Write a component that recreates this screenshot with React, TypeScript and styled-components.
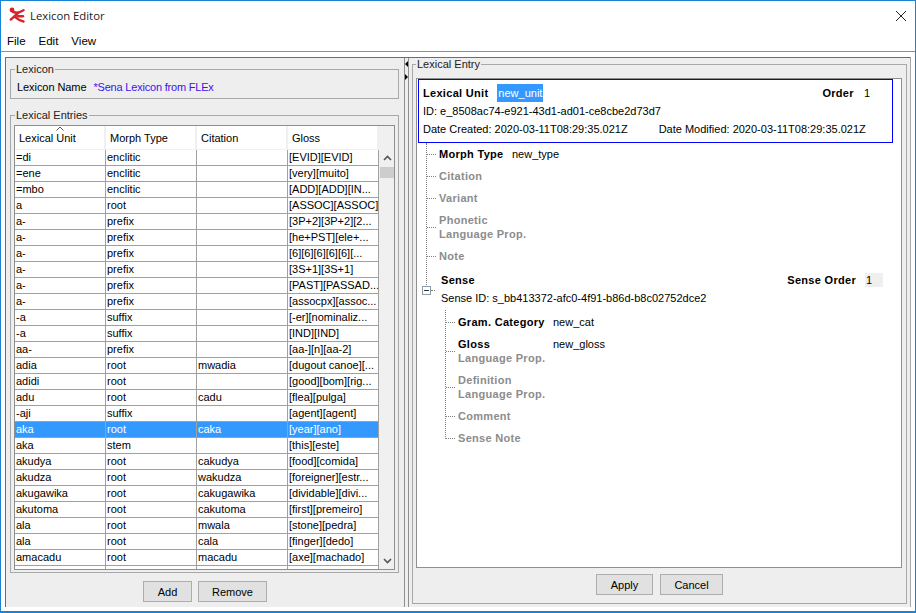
import React from 'react';
import styled, { createGlobalStyle } from 'styled-components';

const Global = createGlobalStyle`
  html, body { margin: 0; padding: 0; background: #fff; }
  body { width: 916px; height: 613px; overflow: hidden; font-family: "Liberation Sans", Arial, sans-serif; font-size: 11px; color: #000; }
`;

type Entry = [string, string, string, string];

const entries: Entry[] = [
  ['=di', 'enclitic', '', '[EVID][EVID]'],
  ['=ene', 'enclitic', '', '[very][muito]'],
  ['=mbo', 'enclitic', '', '[ADD][ADD][IN...'],
  ['a', 'root', '', '[ASSOC][ASSOC]'],
  ['a-', 'prefix', '', '[3P+2][3P+2][2...'],
  ['a-', 'prefix', '', '[he+PST][ele+...'],
  ['a-', 'prefix', '', '[6][6][6][6][6][...'],
  ['a-', 'prefix', '', '[3S+1][3S+1]'],
  ['a-', 'prefix', '', '[PAST][PASSAD...'],
  ['a-', 'prefix', '', '[assocpx][assoc...'],
  ['-a', 'suffix', '', '[-er][nominaliz...'],
  ['-a', 'suffix', '', '[IND][IND]'],
  ['aa-', 'prefix', '', '[aa-][n][aa-2]'],
  ['adia', 'root', 'mwadia', '[dugout canoe][...'],
  ['adidi', 'root', '', '[good][bom][rig...'],
  ['adu', 'root', 'cadu', '[flea][pulga]'],
  ['-aji', 'suffix', '', '[agent][agent]'],
  ['aka', 'root', 'caka', '[year][ano]'],
  ['aka', 'stem', '', '[this][este]'],
  ['akudya', 'root', 'cakudya', '[food][comida]'],
  ['akudza', 'root', 'wakudza', '[foreigner][estr...'],
  ['akugawika', 'root', 'cakugawika', '[dividable][divi...'],
  ['akutoma', 'root', 'cakutoma', '[first][premeiro]'],
  ['ala', 'root', 'mwala', '[stone][pedra]'],
  ['ala', 'root', 'cala', '[finger][dedo]'],
  ['amacadu', 'root', 'macadu', '[axe][machado]'],
  ['amadia', 'root', 'macadia', '[fat][fat]'],
];

const Window = styled.div`
  width: 916px;
  height: 613px;
  box-sizing: border-box;
  border: 1px solid #1883d7;
  border-bottom-width: 2px;
  display: flex;
  flex-direction: column;
  background: #fff;
`;

const TitleBar = styled.div`
  height: 29px;
  flex: none;
  display: flex;
  align-items: center;
  padding: 0 8px;
  font-family: "Open Sans", "Liberation Sans", sans-serif;
  font-size: 11.3px;
  color: #222;
`;

const TitleText = styled.span`
  margin-left: 5px;
  flex: 1;
`;

const MenuBar = styled.div`
  height: 22px;
  flex: none;
  box-sizing: border-box;
  display: flex;
  align-items: center;
  gap: 13px;
  padding: 1px 6px 0;
  font-size: 11.5px;
  border-bottom: 1px solid #8f8f8f;
`;

const Body = styled.div`
  flex: 1;
  display: flex;
  background: #fff;
  padding: 5px 4px 4px;
  min-height: 0;
`;

const Split = styled.div`
  flex: 1;
  display: flex;
  background: #eeeeee;
  border: 1px solid #6d6d6d;
  border-bottom: none;
  border-right-color: #a8a8a8;
  min-height: 0;
`;

const LeftPane = styled.div`
  width: 399px;
  flex: none;
  box-sizing: border-box;
  border-right: 1px solid #8f8f8f;
  padding: 5px 5px 0 4px;
  display: flex;
  flex-direction: column;
`;

const Divider = styled.div`
  width: 3px;
  flex: none;
  display: flex;
  flex-direction: column;
  gap: 7px;
  padding-top: 3px;
  align-items: center;
`;

const Arrow = styled.span<{ $dir: 'left' | 'right' }>`
  width: 0;
  height: 0;
  border-top: 3px solid transparent;
  border-bottom: 3px solid transparent;
  ${p => (p.$dir === 'left' ? 'border-right: 3px solid #000;' : 'border-left: 3px solid #000;')}
`;

const RightPane = styled.div`
  flex: 1;
  border-left: 1px solid #8f8f8f;
  padding: 0 3px 0 3px;
  display: flex;
  flex-direction: column;
  min-width: 0;
`;

const Group = styled.fieldset<{ $h: number; $gap?: number }>`
  margin: ${p => p.$gap ?? 0}px 0 0;
  padding: 0 3px;
  height: ${p => p.$h}px;
  flex: none;
  box-sizing: border-box;
  border: 1px solid #a8a8a8;
  min-width: 0;
`;

const Legend = styled.legend`
  margin-left: 1px;
  padding: 0 1px;
  font-size: 11px;
  line-height: 12px;
  color: #222;
`;

const EntryLegend = styled(Legend)`
  margin-left: 0;
`;

const NameRow = styled.div`
  display: flex;
  gap: 7px;
  padding: 5px 3px 0;
  line-height: 14px;
  letter-spacing: -0.07px;
`;

const BlueText = styled.span`
  color: #3f10f0;
  letter-spacing: -0.2px;
`;

const TableBox = styled.div`
  display: flex;
  margin-top: 4px;
  height: 445px;
  box-sizing: border-box;
  border: 1px solid #8f8f8f;
  overflow: hidden;
`;

const Cols = styled.div`
  width: 364px;
  flex: none;
  background: #fff;
  overflow: hidden;
`;

const HeaderRow = styled.div`
  display: grid;
  grid-template-columns: repeat(4, 91px);
  height: 24px;
  background: #fff;
`;

const HeaderCell = styled.div`
  position: relative;
  padding-left: 4px;
  border-right: 2px solid #f0f0f0;
  border-bottom: 1px solid #f0f0f0;
  box-sizing: border-box;
  display: flex;
  align-items: center;
  line-height: 14px;
`;

const SortMark = styled.svg`
  position: absolute;
  top: 0;
  left: 41px;
`;

const Row = styled.div<{ $selected?: boolean }>`
  display: grid;
  grid-template-columns: repeat(4, 91px);
  height: 16px;
  box-sizing: border-box;
  border-bottom: 1px solid #a0a0a0;
  background: ${p => (p.$selected ? '#3399ff' : '#fff')};
  color: ${p => (p.$selected ? '#fff' : '#000')};
`;

const Cell = styled.div`
  border-right: 1px solid #a0a0a0;
  box-sizing: border-box;
  padding-left: 1px;
  line-height: 14px;
  white-space: nowrap;
  overflow: hidden;
`;

const ScrollBar = styled.div`
  flex: 1;
  background: #f0f0f0;
  display: flex;
  flex-direction: column;
  align-items: center;
  padding-top: 24px;
`;

const ScrollButton = styled.div`
  height: 16px;
  width: 16px;
  flex: none;
  display: flex;
  align-items: center;
  justify-content: center;
`;

const Thumb = styled.div`
  width: 15px;
  height: 11px;
  margin-top: 1px;
  background: #cdcdcd;
`;

const ScrollGap = styled.div`
  flex: 1;
`;

const Buttons = styled.div<{ $gap: number }>`
  display: flex;
  justify-content: center;
  gap: ${p => p.$gap}px;
`;

const Btn = styled.button<{ $w: number }>`
  width: ${p => p.$w}px;
  height: 21px;
  padding: 0;
  box-sizing: border-box;
  background: #e1e1e1;
  border: 1px solid #adadad;
  font-family: inherit;
  font-size: 11px;
  color: #000;
`;

const LeftButtons = styled(Buttons)`
  margin-top: 8px;
  padding-left: 1px;
`;

const RightButtons = styled(Buttons)`
  margin-top: 6px;
`;

const EntryPanel = styled.div`
  height: 490px;
  width: 486px;
  margin-top: 8px;
  box-sizing: border-box;
  background: #fff;
  border: 1px solid #8f8f8f;
  padding: 0 8px 0 1px;
`;

const UnitBox = styled.div`
  height: 64px;
  box-sizing: border-box;
  border: 1px solid #0000ff;
  padding: 4px 4px 0 4px;
  line-height: 18px;
`;

const UnitRow = styled.div`
  display: flex;
  align-items: center;
`;

const Bold = styled.b`
  font-weight: 700;
  letter-spacing: 0.3px;
`;

const Selected = styled.span`
  background: #3399ff;
  color: #fff;
  margin-left: 9px;
  padding: 0 1px;
`;

const OrderBlock = styled.span`
  margin-left: auto;
  display: flex;
  gap: 10px;
  padding-right: 18px;
`;

const Dates = styled.div`
  display: flex;
  gap: 31px;
`;

const Tree = styled.div`
  position: relative;
  padding-left: 13px;
  margin-left: 8px;
`;

const TreeLine = styled.div<{ $top: number; $h: number }>`
  position: absolute;
  left: 0;
  top: ${p => p.$top}px;
  height: ${p => p.$h}px;
  border-left: 1px dotted #808080;
`;

const Node = styled.div<{ $two?: boolean }>`
  position: relative;
  height: ${p => (p.$two ? 36 : 22)}px;
  line-height: 14px;
  display: flex;
  flex-direction: column;
  justify-content: center;

  &::before {
    content: '';
    position: absolute;
    left: -12px;
    top: 50%;
    width: 9px;
    border-top: 1px dotted #808080;
  }
`;

const Label = styled.span<{ $muted?: boolean }>`
  font-weight: 700;
  letter-spacing: 0.3px;
  color: ${p => (p.$muted ? '#8c8c8c' : '#000')};
`;

const Valued = styled.div<{ $w: number }>`
  display: flex;
  > span:first-child {
    width: ${p => p.$w}px;
  }
`;

const SenseBlock = styled.div`
  position: relative;
  padding-left: 2px;
  margin-top: 4px;
  line-height: 18px;
`;

const SenseHead = styled.div`
  display: flex;
  align-items: center;
  height: 18px;
`;

const SenseOrder = styled.span`
  margin-left: auto;
  display: flex;
  align-items: center;
  gap: 9px;
  padding-right: 10px;
`;

const OrderField = styled.span`
  width: 18px;
  height: 14px;
  line-height: 14px;
  padding-left: 1px;
  box-sizing: border-box;
  background: #efefef;
`;

const Expander = styled.span`
  position: absolute;
  left: -17px;
  top: 15px;
  width: 9px;
  height: 9px;
  box-sizing: border-box;
  border: 1px solid #8a9aa8;
  background: #fff;

  &::before {
    content: '';
    position: absolute;
    left: 1px;
    right: 1px;
    top: 3px;
    border-top: 1px solid #333;
  }

  &::after {
    content: '';
    position: absolute;
    left: 8px;
    top: 3px;
    width: 4px;
    border-top: 1px dotted #808080;
  }
`;

const SubTree = styled.div`
  position: relative;
  padding-left: 13px;
  margin-left: 4px;
  margin-top: 4px;
`;

const LogoIcon = () => (
  <svg width="16" height="17" viewBox="0 0 16 17">
    <g stroke="#d8232a" strokeWidth="2.4" strokeLinecap="round" strokeLinejoin="round" fill="none">
      <path d="M2.5 3C4.5 6 8 7 14.5 3.2" />
      <path d="M9 6.2C7 8 4.5 10.5 1.8 12.5" />
      <path d="M5.5 9.5C8 11.5 10 14 14.5 14.5" />
      <path d="M8.5 9.2H14" />
    </g>
    <circle cx="3" cy="3" r="2.4" fill="#d8232a" />
  </svg>
);

const App: React.FC = () => {
  return (
    <>
      <Global />
      <Window>
        <TitleBar>
          <LogoIcon />
          <TitleText>Lexicon Editor</TitleText>
          <svg width="12" height="12" viewBox="0 0 12 12">
            <path d="M1 1L11 11M11 1L1 11" stroke="#222" strokeWidth="1" />
          </svg>
        </TitleBar>
        <MenuBar>
          <span>File</span>
          <span>Edit</span>
          <span>View</span>
        </MenuBar>
        <Body>
          <Split>
            <LeftPane>
              <Group $h={36}>
                <Legend>Lexicon</Legend>
                <NameRow>
                  <span>Lexicon Name</span>
                  <BlueText>*Sena Lexicon from FLEx</BlueText>
                </NameRow>
              </Group>
              <Group $h={464} $gap={10}>
                <Legend>Lexical Entries</Legend>
                <TableBox>
                  <Cols>
                    <HeaderRow>
                      <HeaderCell>
                        <SortMark width="8" height="5" viewBox="0 0 8 5">
                          <path d="M0.5 4.5L4 1L7.5 4.5" fill="none" stroke="#555" />
                        </SortMark>
                        Lexical Unit
                      </HeaderCell>
                      <HeaderCell>Morph Type</HeaderCell>
                      <HeaderCell>Citation</HeaderCell>
                      <HeaderCell>Gloss</HeaderCell>
                    </HeaderRow>
                    {entries.map((e, i) => (
                      <Row key={i} $selected={i === 17}>
                        {e.map((v, j) => (
                          <Cell key={j}>{v}</Cell>
                        ))}
                      </Row>
                    ))}
                  </Cols>
                  <ScrollBar>
                    <ScrollButton>
                      <svg width="9" height="6" viewBox="0 0 9 6">
                        <path d="M1 5L4.5 1.5L8 5" fill="none" stroke="#555" strokeWidth="1.6" />
                      </svg>
                    </ScrollButton>
                    <Thumb />
                    <ScrollGap />
                    <ScrollButton>
                      <svg width="9" height="6" viewBox="0 0 9 6">
                        <path d="M1 1L4.5 4.5L8 1" fill="none" stroke="#555" strokeWidth="1.6" />
                      </svg>
                    </ScrollButton>
                  </ScrollBar>
                </TableBox>
              </Group>
              <LeftButtons $gap={6}>
                <Btn $w={49}>Add</Btn>
                <Btn $w={69}>Remove</Btn>
              </LeftButtons>
            </LeftPane>
            <Divider>
              <Arrow $dir="left" />
              <Arrow $dir="right" />
            </Divider>
            <RightPane>
              <Group $h={546}>
                <EntryLegend>Lexical Entry</EntryLegend>
                <EntryPanel>
                  <UnitBox>
                    <UnitRow>
                      <Bold>Lexical Unit</Bold>
                      <Selected>new_unit</Selected>
                      <OrderBlock>
                        <Bold>Order</Bold>
                        <span>1</span>
                      </OrderBlock>
                    </UnitRow>
                    <div>ID: e_8508ac74-e921-43d1-ad01-ce8cbe2d73d7</div>
                    <Dates>
                      <span>Date Created: 2020-03-11T08:29:35.021Z</span>
                      <span>Date Modified: 2020-03-11T08:29:35.021Z</span>
                    </Dates>
                  </UnitBox>
                  <Tree>
                    <TreeLine $top={0} $h={142} />
                    <Node>
                      <Valued $w={73}>
                        <Label>Morph Type</Label>
                        <span>new_type</span>
                      </Valued>
                    </Node>
                    <Node><Label $muted>Citation</Label></Node>
                    <Node><Label $muted>Variant</Label></Node>
                    <Node $two>
                      <Label $muted>Phonetic</Label>
                      <Label $muted>Language Prop.</Label>
                    </Node>
                    <Node><Label $muted>Note</Label></Node>
                    <SenseBlock>
                      <Expander />
                      <SenseHead>
                        <Bold>Sense</Bold>
                        <SenseOrder>
                          <Bold>Sense Order</Bold>
                          <OrderField>1</OrderField>
                        </SenseOrder>
                      </SenseHead>
                      <div>Sense ID: s_bb413372-afc0-4f91-b86d-b8c02752dce2</div>
                      <SubTree>
                        <TreeLine $top={-1} $h={129} />
                        <Node>
                          <Valued $w={95}>
                            <Label>Gram. Category</Label>
                            <span>new_cat</span>
                          </Valued>
                        </Node>
                        <Node $two>
                          <Valued $w={95}>
                            <Label>Gloss</Label>
                            <span>new_gloss</span>
                          </Valued>
                          <Label $muted>Language Prop.</Label>
                        </Node>
                        <Node $two>
                          <Label $muted>Definition</Label>
                          <Label $muted>Language Prop.</Label>
                        </Node>
                        <Node><Label $muted>Comment</Label></Node>
                        <Node><Label $muted>Sense Note</Label></Node>
                      </SubTree>
                    </SenseBlock>
                  </Tree>
                </EntryPanel>
                <RightButtons $gap={7}>
                  <Btn $w={57}>Apply</Btn>
                  <Btn $w={63}>Cancel</Btn>
                </RightButtons>
              </Group>
            </RightPane>
          </Split>
        </Body>
      </Window>
    </>
  );
};

export default App;
